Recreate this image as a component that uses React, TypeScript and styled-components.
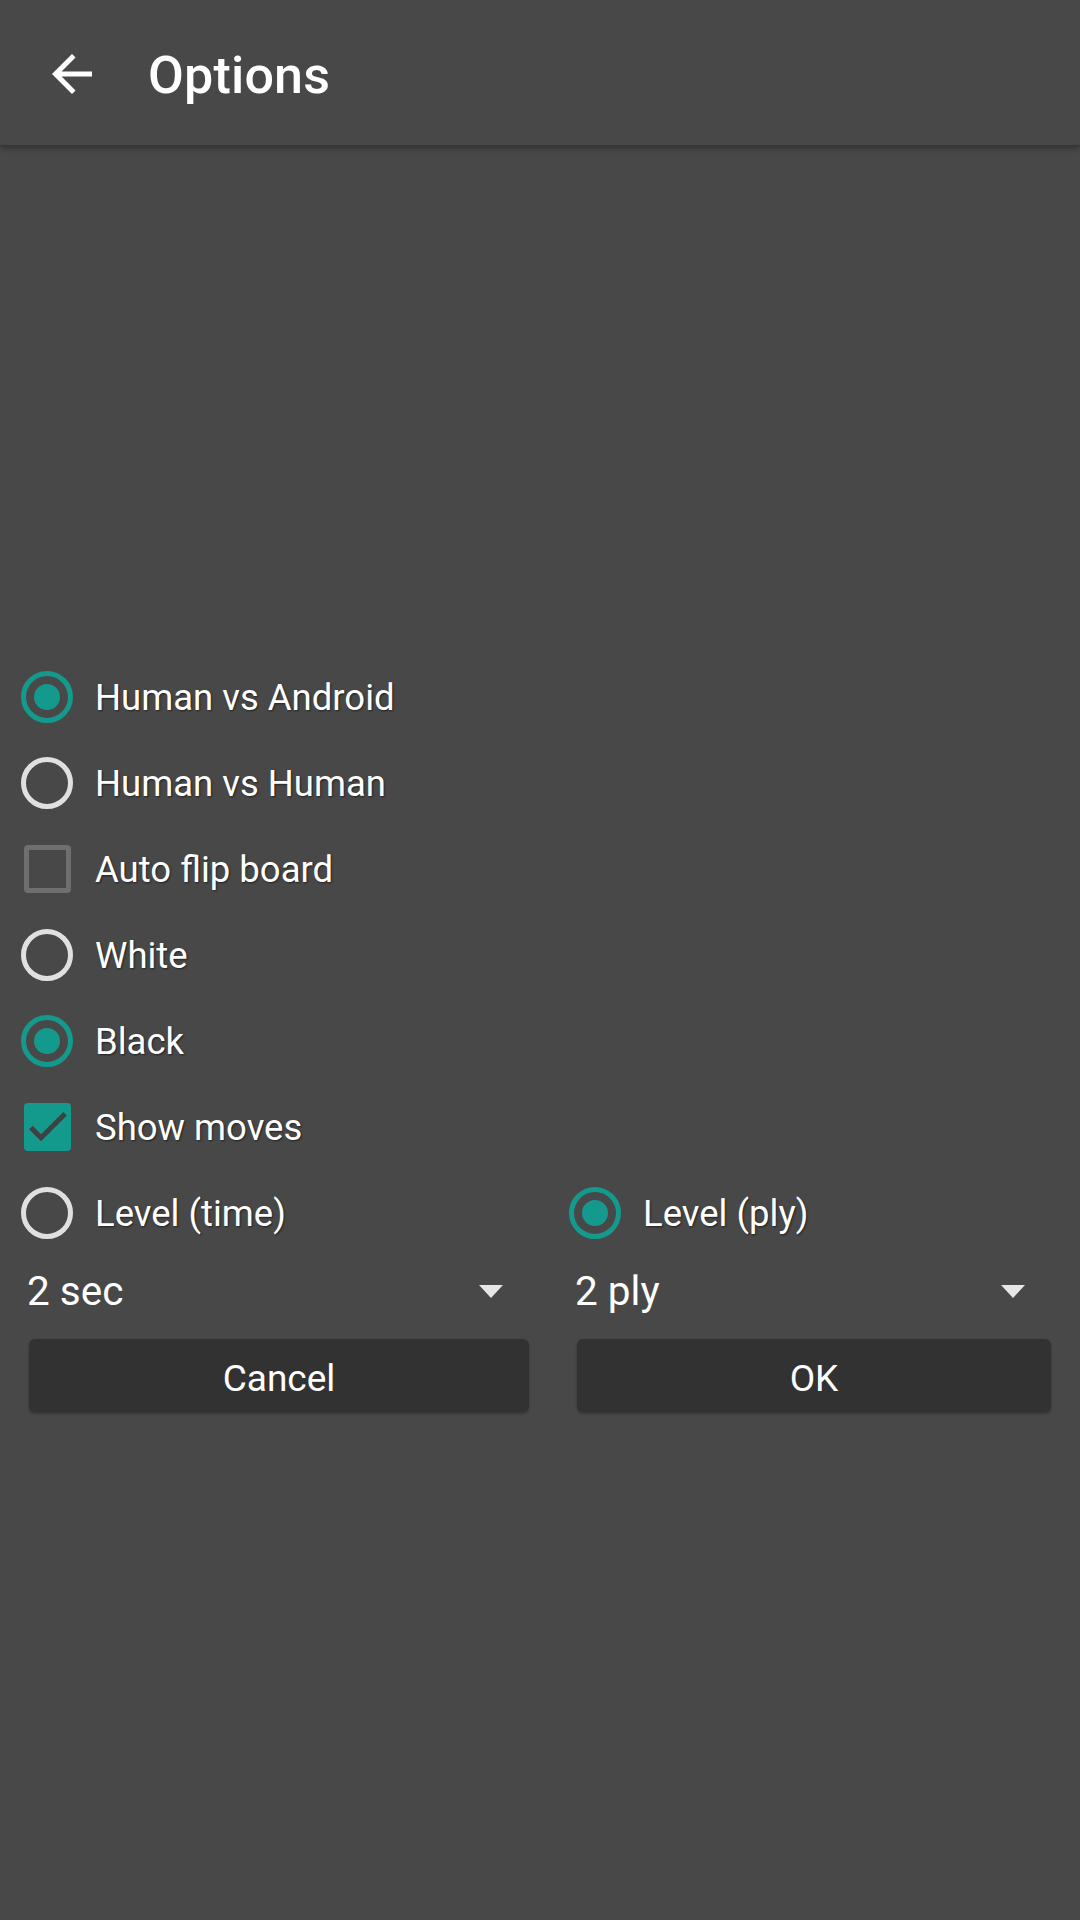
import React from 'react';
import styled, { createGlobalStyle } from 'styled-components';

const GlobalStyle = createGlobalStyle`
  html, body {
    margin: 0;
    padding: 0;
    background: #484848;
    font-family: Roboto, "Noto Sans", sans-serif;
  }
`;

const TEAL = '#139a8c';

const Screen = styled.div`
  width: 1080px;
  height: 1920px;
  background: #484848;
  display: flex;
  flex-direction: column;
  overflow: hidden;
`;

const Toolbar = styled.header`
  height: 145px;
  box-sizing: border-box;
  padding-top: 3px;
  display: flex;
  align-items: center;
  background: #484848;
  box-shadow: 0 3px 6px rgba(0, 0, 0, 0.35);
  position: relative;
  z-index: 1;
`;

const BackButton = styled.div`
  width: 60px;
  height: 60px;
  margin-left: 42px;
  margin-right: 46px;
  display: flex;
`;

const Title = styled.h1`
  margin: 2px 0 0;
  font-size: 52px;
  font-weight: 500;
  color: #ffffff;
  letter-spacing: 0.2px;
`;

const BoardArea = styled.div`
  height: 509px;
`;

const Form = styled.div`
  padding: 0 21px;
  display: flex;
  flex-direction: column;
`;

const Row = styled.label`
  height: 86px;
  display: flex;
  align-items: center;
  gap: 22px;
`;

const Label = styled.span`
  font-size: 36.5px;
  color: #ffffff;
  text-shadow: 1px 1px 2px rgba(0, 0, 0, 0.55);
`;

const RadioRing = styled.span<{ $on?: boolean }>`
  width: 52px;
  height: 52px;
  box-sizing: border-box;
  border-radius: 50%;
  border: 5px solid ${p => (p.$on ? TEAL : '#e0e0e0')};
  display: flex;
  align-items: center;
  justify-content: center;
  flex-shrink: 0;

  &::after {
    content: '';
    width: 26px;
    height: 26px;
    border-radius: 50%;
    background: ${TEAL};
    display: ${p => (p.$on ? 'block' : 'none')};
  }
`;

const BoxSlot = styled.span`
  width: 52px;
  height: 52px;
  display: flex;
  align-items: center;
  justify-content: center;
  flex-shrink: 0;
`;

const Box = styled.span<{ $on?: boolean }>`
  width: 47px;
  height: 48px;
  box-sizing: border-box;
  border-radius: 4px;
  border: ${p => (p.$on ? 'none' : '5px solid #6f6f6f')};
  background: ${p => (p.$on ? TEAL : 'transparent')};
  display: flex;
  align-items: center;
  justify-content: center;
`;

const Columns = styled.div`
  display: grid;
  grid-template-columns: 516px 490px;
  column-gap: 32px;
`;

const Column = styled.div`
  display: flex;
  flex-direction: column;
`;

const Spinner = styled.div`
  height: 70px;
  display: flex;
  align-items: center;
  justify-content: space-between;
  padding-left: 6px;
  padding-right: 34px;
`;

const SpinnerText = styled.span`
  font-size: 40.5px;
  color: #ffffff;
`;

const Caret = styled.span`
  width: 0;
  height: 0;
  border-left: 12px solid transparent;
  border-right: 12px solid transparent;
  border-top: 13px solid #e6e6e6;
`;

const Button = styled.button`
  margin: 13px 8px 0;
  height: 73px;
  padding: 6px 0 0;
  border: none;
  border-radius: 6px;
  background: #323232;
  color: #ffffff;
  font-family: Roboto, "Noto Sans", sans-serif;
  font-size: 37px;
  box-shadow: 0 2px 3px rgba(0, 0, 0, 0.25);
`;

const Radio = ({ on, label }: { on?: boolean; label: string }) => (
  <Row>
    <RadioRing $on={on} />
    <Label>{label}</Label>
  </Row>
);

const Check = ({ on, label }: { on?: boolean; label: string }) => (
  <Row>
    <BoxSlot>
      <Box $on={on}>
        {on && (
          <svg width="47" height="47" viewBox="0 0 24 24">
            <path d="M3.5 12l5.2 5.2L21 5" fill="none" stroke="#404040" strokeWidth="2.6" />
          </svg>
        )}
      </Box>
    </BoxSlot>
    <Label>{label}</Label>
  </Row>
);

export default function App() {
  return (
    <Screen>
      <GlobalStyle />
      <Toolbar>
        <BackButton>
          <svg width="60" height="60" viewBox="0 0 24 24">
            <path
              d="M20 11H7.83l5.59-5.59L12 4l-8 8 8 8 1.41-1.41L7.83 13H20v-2z"
              fill="#ffffff"
            />
          </svg>
        </BackButton>
        <Title>Options</Title>
      </Toolbar>
      <BoardArea />
      <Form>
        <Radio on label="Human vs Android" />
        <Radio label="Human vs Human" />
        <Check label="Auto flip board" />
        <Radio label="White" />
        <Radio on label="Black" />
        <Check on label="Show moves" />
        <Columns>
          <Column>
            <Radio label="Level (time)" />
            <Spinner>
              <SpinnerText>2 sec</SpinnerText>
              <Caret />
            </Spinner>
            <Button>Cancel</Button>
          </Column>
          <Column>
            <Radio on label="Level (ply)" />
            <Spinner>
              <SpinnerText>2 ply</SpinnerText>
              <Caret />
            </Spinner>
            <Button>OK</Button>
          </Column>
        </Columns>
      </Form>
    </Screen>
  );
}
